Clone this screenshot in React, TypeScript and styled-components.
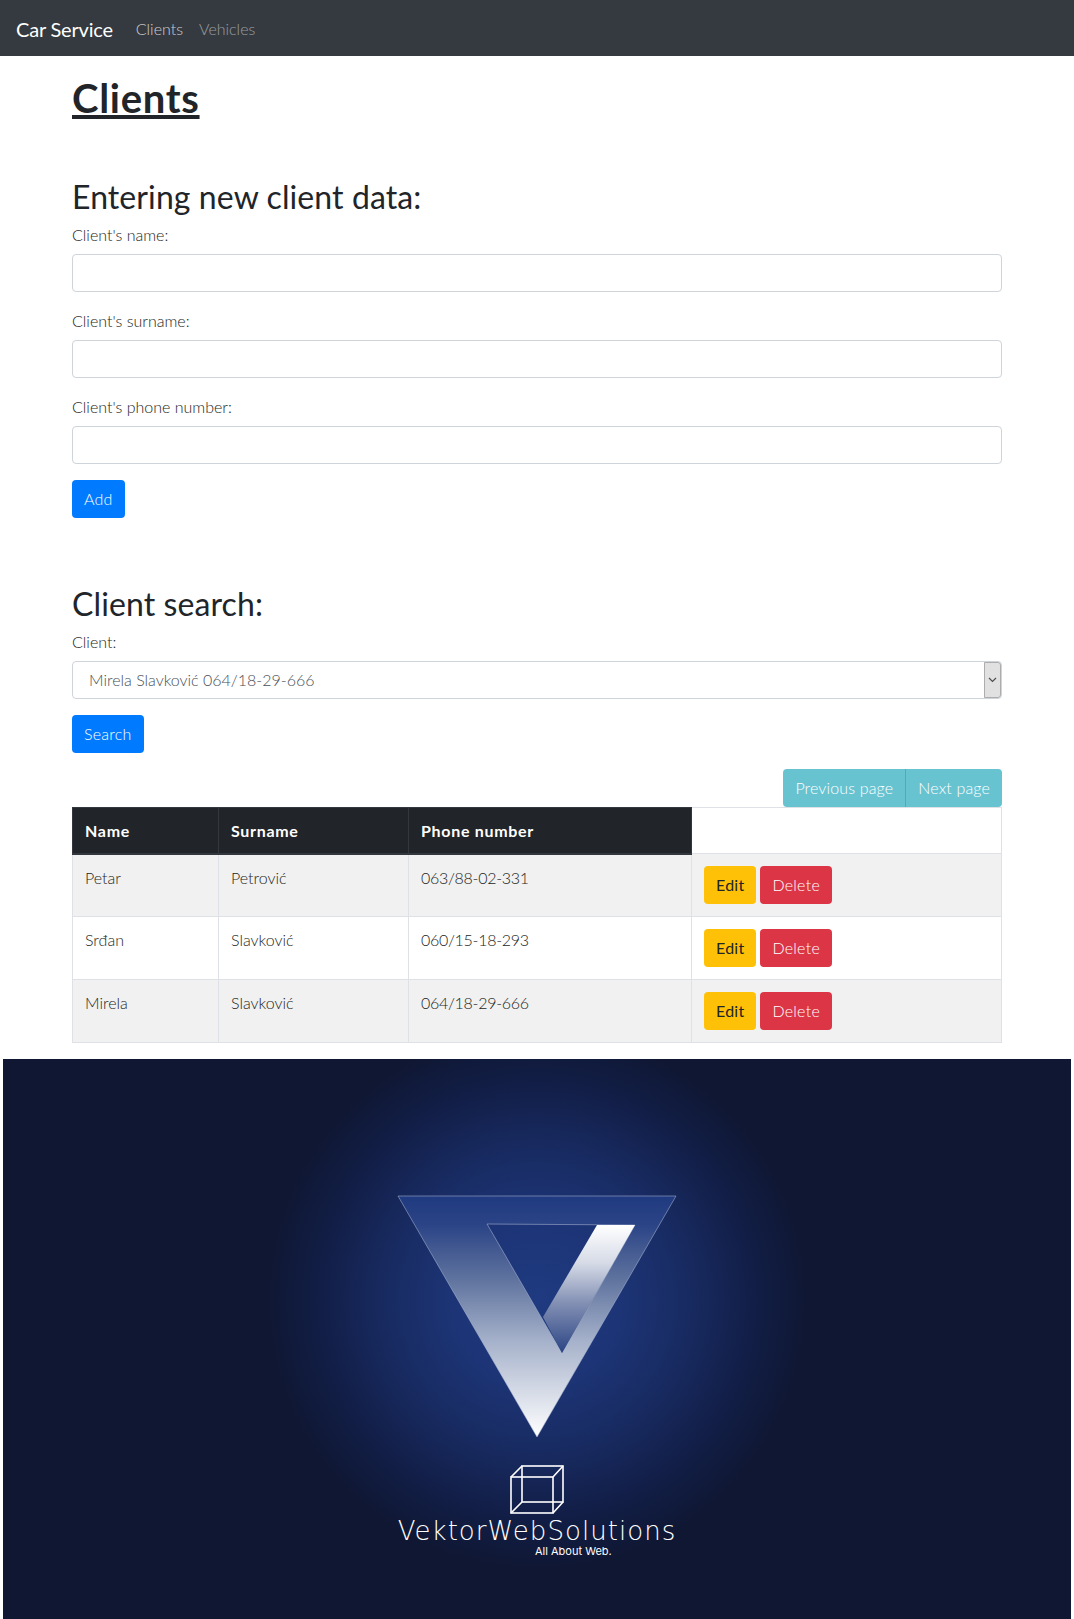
import React, {FC} from 'react';
import styled, {createGlobalStyle} from 'styled-components';

const GlobalStyle = createGlobalStyle`
  * { box-sizing: border-box; }
  body {
    margin: 0;
    background: #ffffff;
    color: #212529;
    font-family: Lato, "Open Sans", "Liberation Sans", sans-serif;
    font-weight: 300;
    font-size: 16px;
    line-height: 24px;
  }
`;

const Navbar = styled.nav`
  height: 56px;
  background: #343a40;
  display: flex;
  align-items: center;
  padding: 1px 16px 0;
`;

const Brand = styled.a`
  color: #ffffff;
  font-size: 20px;
  font-weight: 400;
  letter-spacing: -0.2px;
  margin-right: 23px;
`;

const NavLink = styled.a<{$dim?: boolean}>`
  color: rgba(255, 255, 255, ${p => (p.$dim ? 0.5 : 0.75)});
  font-size: 16px;
  margin-right: 16px;
`;

const Container = styled.main`
  width: 960px;
  margin: 0 auto;
  padding: 0 15px;
`;

const Title = styled.h1`
  margin: 0;
  padding-top: 18px;
  height: 120px;
  font-size: 40px;
  line-height: 48px;
  font-weight: 700;
  letter-spacing: 0.7px;
  text-decoration: underline;
`;

const SectionTitle = styled.h2`
  margin: 0 0 6px;
  padding-top: 2px;
  font-size: 32px;
  line-height: 38px;
  font-weight: 400;
  letter-spacing: 0.1px;
`;

const Group = styled.div`
  margin-bottom: 16px;
`;

const Label = styled.label`
  display: block;
  padding-top: 1px;
  margin-bottom: 7px;
  color: #1b1e21;
`;

const Input = styled.input`
  display: block;
  width: 100%;
  height: 38px;
  border: 1px solid #ced4da;
  border-radius: 4px;
  background: #ffffff;
  outline: none;
`;

const SelectWrap = styled.div`
  position: relative;
`;

const Select = styled.select`
  display: block;
  width: 100%;
  height: 38px;
  padding: 0 24px 0 16px;
  border: 1px solid #ced4da;
  border-radius: 4px;
  background: #ffffff;
  color: #495057;
  font: inherit;
  appearance: none;
  outline: none;
`;

const SelectArrow = styled.span`
  position: absolute;
  top: 1px;
  right: 1px;
  bottom: 1px;
  width: 17px;
  display: flex;
  align-items: center;
  justify-content: center;
  background: #e1e1e1;
  border: 1px solid #adadad;
  border-radius: 0 3px 3px 0;
  pointer-events: none;
`;

const Button = styled.button<{$bg: string; $fg?: string}>`
  height: 38px;
  padding: 0 12px;
  border: none;
  border-radius: 4px;
  background: ${p => p.$bg};
  color: ${p => p.$fg || '#ffffff'};
  font: inherit;
  font-weight: ${p => (p.$fg ? 400 : 300)};
  letter-spacing: 0.25px;
`;

const AddSection = styled.section`
  padding-bottom: 65px;
`;

const SearchSection = styled.section`
  height: 54px;
`;

const Pager = styled.div`
  display: flex;
  justify-content: flex-end;
`;

const PagerButton = styled.button<{$side: 'left' | 'right'}>`
  height: 38px;
  padding: 0 12px;
  border: none;
  background: #68c3d1;
  color: #ffffff;
  font: inherit;
  letter-spacing: 0.15px;
  border-radius: ${p => (p.$side === 'left' ? '4px 0 0 4px' : '0 4px 4px 0')};
  ${p => p.$side === 'right' && 'border-left: 1px solid #3fb1c2;'}
`;

const Table = styled.table`
  width: 100%;
  table-layout: fixed;
  border-collapse: collapse;
  margin-bottom: 16px;
`;

const HeadCell = styled.th<{$w: number}>`
  width: ${p => p.$w}px;
  height: 46px;
  padding: 2px 12px 0;
  background: #212529;
  border: 1px solid #32383e;
  border-bottom-width: 2px;
  color: #ffffff;
  font-size: 16px;
  font-weight: 700;
  letter-spacing: 0.7px;
  text-align: left;
`;

const EmptyHeadCell = styled.th`
  height: 46px;
  background: #ffffff;
  border: 1px solid #dee2e6;
`;

const Row = styled.tr<{$odd: boolean}>`
  background: ${p => (p.$odd ? '#f1f1f1' : '#ffffff')};
`;

const Cell = styled.td`
  height: 63px;
  padding: 11px 12px 12px;
  border: 1px solid #dee2e6;
  vertical-align: top;
  color: #1b1e21;
`;

const PhoneCell = styled(Cell)`
  letter-spacing: -0.3px;
`;

const ActionCell = styled(Cell)`
  padding-top: 12px;
`;

const Actions = styled.div`
  display: flex;
  gap: 4px;
`;

const Footer = styled.footer`
  width: 1068px;
  height: 560px;
  margin: 0 auto;
  padding-top: 136px;
  display: flex;
  flex-direction: column;
  align-items: center;
  color: #ffffff;
  background: radial-gradient(
    circle 270px at 50% 241px,
    #1f3a80 0%,
    #1d3577 30%,
    #182b62 55%,
    #121e47 80%,
    #0f1733 100%
  );
`;

const Cube = styled.svg`
  margin-top: 27px;
`;

const BrandName = styled.div`
  margin-top: 1px;
  font-family: "DejaVu Sans ExtraLight", "DejaVu Sans", sans-serif;
  font-size: 26px;
  line-height: 30px;
  font-weight: 200;
  letter-spacing: 1.05px;
`;

const Tagline = styled.div`
  align-self: flex-start;
  margin: -1px 0 0 532px;
  font-family: Inter, "Open Sans", sans-serif;
  font-size: 11px;
  line-height: 12px;
  font-weight: 400;
`;

const clients = [
  {name: 'Petar', surname: 'Petrović', phone: '063/88-02-331'},
  {name: 'Srđan', surname: 'Slavković', phone: '060/15-18-293'},
  {name: 'Mirela', surname: 'Slavković', phone: '064/18-29-666'},
];

const VLogo: FC = () => (
  <svg width="280" height="243" viewBox="0 0 280 243">
    <defs>
      <linearGradient id="vFill" x1="0" y1="0" x2="0" y2="1">
        <stop offset="0" stopColor="#203a80" />
        <stop offset="0.12" stopColor="#2b4486" />
        <stop offset="0.35" stopColor="#60749f" />
        <stop offset="0.6" stopColor="#a5b1ca" />
        <stop offset="1" stopColor="#ffffff" />
      </linearGradient>
      <linearGradient id="vBand" x1="0" y1="0" x2="0" y2="1">
        <stop offset="0" stopColor="#ffffff" />
        <stop offset="0.3" stopColor="#d5dae6" />
        <stop offset="0.6" stopColor="#8592b5" />
        <stop offset="1" stopColor="#2b4484" />
      </linearGradient>
    </defs>
    <path
      d="M1 1 L279 1 L140 242 Z M90 29 L165 158 L238 30 Z"
      fill="url(#vFill)"
      fillRule="evenodd"
      stroke="#aab6d2"
      strokeOpacity="0.7"
      strokeWidth="0.8"
    />
    <path d="M200 30 L238 30 L165 158 L146 122 Z" fill="url(#vBand)" />
  </svg>
);

const App: FC = () => {
  return (
    <>
      <GlobalStyle />
      <Navbar>
        <Brand>Car Service</Brand>
        <NavLink>Clients</NavLink>
        <NavLink $dim>Vehicles</NavLink>
      </Navbar>
      <Container>
        <Title>Clients</Title>
        <AddSection>
          <SectionTitle>Entering new client data:</SectionTitle>
          <Group>
            <Label>Client's name:</Label>
            <Input />
          </Group>
          <Group>
            <Label>Client's surname:</Label>
            <Input />
          </Group>
          <Group>
            <Label>Client's phone number:</Label>
            <Input />
          </Group>
          <Button $bg="#007bff">Add</Button>
        </AddSection>
        <SectionTitle>Client search:</SectionTitle>
        <Group>
          <Label>Client:</Label>
          <SelectWrap>
            <Select defaultValue="3">
              <option value="3">Mirela Slavković 064/18-29-666</option>
            </Select>
            <SelectArrow>
              <svg width="9" height="6" viewBox="0 0 9 6">
                <path d="M1 1 L4.5 4.5 L8 1" fill="none" stroke="#4d4d4d" strokeWidth="1.2" />
              </svg>
            </SelectArrow>
          </SelectWrap>
        </Group>
        <SearchSection>
          <Button $bg="#007bff">Search</Button>
        </SearchSection>
        <Pager>
          <PagerButton $side="left">Previous page</PagerButton>
          <PagerButton $side="right">Next page</PagerButton>
        </Pager>
        <Table>
          <thead>
            <tr>
              <HeadCell $w={146}>Name</HeadCell>
              <HeadCell $w={190}>Surname</HeadCell>
              <HeadCell $w={283}>Phone number</HeadCell>
              <EmptyHeadCell />
            </tr>
          </thead>
          <tbody>
            {clients.map((c, i) => (
              <Row key={c.phone} $odd={i % 2 === 0}>
                <Cell>{c.name}</Cell>
                <Cell>{c.surname}</Cell>
                <PhoneCell>{c.phone}</PhoneCell>
                <ActionCell>
                  <Actions>
                    <Button $bg="#ffc107" $fg="#212529">Edit</Button>
                    <Button $bg="#dc3545">Delete</Button>
                  </Actions>
                </ActionCell>
              </Row>
            ))}
          </tbody>
        </Table>
      </Container>
      <Footer>
        <VLogo />
        <Cube width="54" height="50" viewBox="0 0 54 50">
          <g fill="none" stroke="#ffffff" strokeWidth="1.6">
            <rect x="1" y="12" width="42" height="36" />
            <rect x="12" y="1" width="41" height="36" />
            <path d="M1 12 L12 1 M43 12 L53 1 M43 48 L53 37 M1 48 L12 37" />
          </g>
        </Cube>
        <BrandName>VektorWebSolutions</BrandName>
        <Tagline>All About Web.</Tagline>
      </Footer>
    </>
  );
};

export default App;
